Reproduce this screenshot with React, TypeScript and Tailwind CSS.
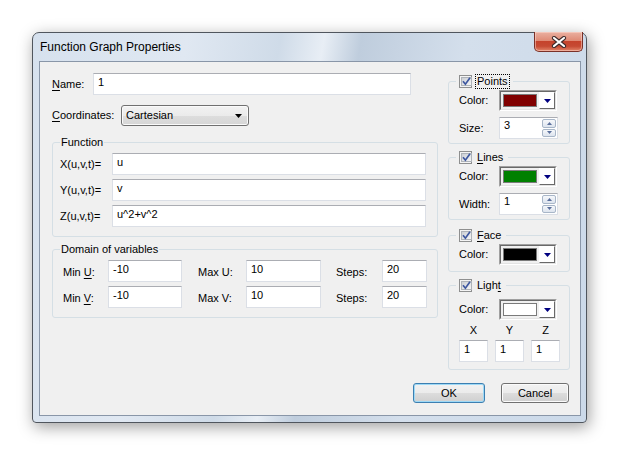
import React from 'react';

// Win7 "Function Graph Properties" dialog

function U({ children }: { children: React.ReactNode }) {
  return <span className="underline underline-offset-[2px] decoration-1">{children}</span>;
}

function TextBox({ value, className = '' }: { value: string; className?: string }) {
  return (
    <div className={`h-[22px] shrink-0 bg-white border border-[#dbdfe6] border-t-[#abadb3] pl-[4px] pt-[2px] leading-[13px] ${className}`}>
      {value}
    </div>
  );
}

function Check() {
  return (
    <span className="w-[13px] h-[13px] shrink-0 border border-[#8e8f8f] bg-[#f4f4f4] p-[1px] flex">
      <span className="flex-1 border border-[#aeb3b9] bg-gradient-to-br from-[#cbcfd5] to-[#f6f6f6] flex items-center justify-center">
        <svg width="9" height="9" viewBox="0 0 9 9">
          <path d="M1 4.2 L3.4 7.2 L8 0.8" stroke="#3d57a0" strokeWidth="1.7" fill="none" />
        </svg>
      </span>
    </span>
  );
}

function Group({ title, className = '', children }: { title: string; className?: string; children: React.ReactNode }) {
  return (
    <div className={`relative border border-[#d5dfe5] rounded-[3px] ${className}`}>
      <span className="absolute -top-[8px] left-[7px] px-[1px] bg-[#f0f0f0] leading-[14px]">{title}</span>
      {children}
    </div>
  );
}

function CheckGroup({ label, focus = false, className = '', children }: { label: React.ReactNode; focus?: boolean; className?: string; children: React.ReactNode }) {
  return (
    <div className={`relative border border-[#d5dfe5] rounded-[3px] pl-[10px] flex flex-col ${className}`}>
      <div className="absolute -top-[8px] left-[7px] px-[3px] bg-[#f0f0f0] flex items-center gap-[3px] h-[15px]">
        <Check />
        <span className={`leading-[13px] px-[1px] ${focus ? 'border border-dotted border-black' : 'border border-transparent'}`}>{label}</span>
      </div>
      {children}
    </div>
  );
}

function ColorCombo({ color }: { color: string }) {
  return (
    <div className="w-[58px] h-[21px] flex border border-[#a0a0a0] border-r-white border-b-white">
      <div className="flex-1 flex border border-[#696969] border-r-[#e3e3e3] border-b-[#e3e3e3] bg-[#f0f0f0]">
        <div className="flex-1 p-[2px] flex">
          <div className={`flex-1 border border-[#7a7a7a] ${color}`} />
        </div>
        <div className="w-[16px] flex items-center justify-center bg-white border border-white border-r-[#696969] border-b-[#696969]">
          <svg width="7" height="4" viewBox="0 0 7 4">
            <path d="M0 0h7L3.5 4z" fill="#000080" />
          </svg>
        </div>
      </div>
    </div>
  );
}

function Spin({ value }: { value: string }) {
  return (
    <div className="w-[59px] h-[22px] flex bg-white border border-[#dbdfe6] border-t-[#abadb3]">
      <span className="flex-1 pl-[4px] pt-[1px] leading-[13px]">{value}</span>
      <div className="w-[15px] flex flex-col gap-[1px] py-[1px] pr-[1px]">
        {[0, 1].map((i) => (
          <div key={i} className="flex-1 rounded-[2px] border border-[#a8b6c8] bg-gradient-to-b from-[#f6f8fb] to-[#dde4ee] flex items-center justify-center">
            <svg width="5" height="3" viewBox="0 0 5 3">
              <path d={i === 0 ? 'M0 3h5L2.5 0z' : 'M0 0h5L2.5 3z'} fill="#5a6f9c" />
            </svg>
          </div>
        ))}
      </div>
    </div>
  );
}

function Btn({ children, def = false, className = '' }: { children: React.ReactNode; def?: boolean; className?: string }) {
  return (
    <div
      className={`h-[20px] flex items-center justify-center rounded-[3px] border ${
        def ? 'border-[#3c7fb1] shadow-[inset_0_0_0_1px_#9ed9f6]' : 'border-[#707070] shadow-[inset_0_0_0_1px_#fbfbfb]'
      } bg-[linear-gradient(#f2f2f2_0%,#ebebeb_50%,#dddddd_50%,#cfcfcf_100%)] ${className}`}
    >
      {children}
    </div>
  );
}

export default function App() {
  return (
    <div className="min-h-[456px] w-[620px] bg-white pt-[32px] pl-[32px] text-[11px] text-black font-['Liberation_Sans',Arial,sans-serif]">
      <div className="w-[555px] h-[391px] flex flex-col rounded-t-[7px] rounded-b-[4px] border border-[#50565e] bg-[linear-gradient(100deg,#d6e1ee_0%,#e0e8f2_25%,#cfdbe8_40%,#e8eef5_47%,#bfcddd_53%,#d4dfec_70%,#cbd9e9_100%)] shadow-[2px_4px_16px_rgba(0,0,0,0.38)]">
        {/* Title bar */}
        <div className="h-[28px] flex justify-between pl-[7px] pr-[3px]">
          <span className="self-center text-[12px] leading-[14px]">Function Graph Properties</span>
          <div className="-mt-[1px] w-[49px] h-[20px] rounded-b-[5px] border border-[#7a3128] border-t-0 bg-[linear-gradient(#eab0a1_0%,#df8b76_45%,#c5432c_50%,#c64a33_75%,#e2866a_100%)] shadow-[inset_0_0_0_1px_rgba(255,220,210,0.5)] flex items-center justify-center">
            <svg width="16" height="12" viewBox="0 0 16 12">
              <path d="M3 2 L13 10 M13 2 L3 10" stroke="#3b2a2a" strokeWidth="4.2" strokeLinecap="round" />
              <path d="M3 2 L13 10 M13 2 L3 10" stroke="#ffffff" strokeWidth="2.2" strokeLinecap="round" />
            </svg>
          </div>
        </div>

        <div className="pl-[6px] pr-[5px]">
          {/* Client area */}
          <div className="h-[355px] w-[542px] border border-[#8996a8] bg-[#f0f0f0] flex flex-col pl-[12px] pr-[10px] pt-[11px] pb-[12px]">
            <div className="flex gap-[10px]">
              {/* Left column */}
              <div className="w-[386px] flex flex-col">
                <div className="flex items-center h-[22px]">
                  <span className="w-[41px]"><U>N</U>ame:</span>
                  <TextBox className="w-[318px]" value="1" />
                </div>
                <div className="flex items-center h-[21px] mt-[10px]">
                  <span className="w-[69px]"><U>C</U>oordinates:</span>
                  <div className="w-[128px] h-[21px] flex items-center justify-between rounded-[3px] border border-[#707070] bg-[linear-gradient(#f2f2f2_0%,#ebebeb_50%,#dddddd_50%,#d6d6d6_100%)] shadow-[inset_0_0_0_1px_#fafafa] pl-[4px] pr-[6px]">
                    <span>Cartesian</span>
                    <svg width="7" height="4" viewBox="0 0 7 4">
                      <path d="M0 0h7L3.5 4z" fill="#000" />
                    </svg>
                  </div>
                </div>

                <Group title="Function" className="mt-[16px] pt-[10px] pb-[9px] pl-[7px] flex flex-col gap-[4px]">
                  {[
                    ['X(u,v,t)=', 'u'],
                    ['Y(u,v,t)=', 'v'],
                    ['Z(u,v,t)=', 'u^2+v^2'],
                  ].map(([l, v]) => (
                    <div key={l} className="flex items-center">
                      <span className="w-[52px]">{l}</span>
                      <TextBox className="w-[314px]" value={v} />
                    </div>
                  ))}
                </Group>

                <Group title="Domain of variables" className="mt-[12px] pt-[10px] pb-[9px] pl-[10px] flex flex-col gap-[4px]">
                  {(['U', 'V'] as const).map((k) => (
                    <div key={k} className="flex items-center">
                      <span className="w-[45px] pt-[2px]">Min <U>{k}</U>:</span>
                      <TextBox className="w-[74px]" value="-10" />
                      <span className="w-[48px] ml-[16px] pt-[2px]">Max {k}:</span>
                      <TextBox className="w-[75px]" value="10" />
                      <span className="w-[46px] ml-[15px] pt-[2px]">Steps:</span>
                      <TextBox className="w-[45px]" value="20" />
                    </div>
                  ))}
                </Group>
              </div>

              {/* Right column */}
              <div className="w-[122px] flex flex-col">
                <CheckGroup label="Points" focus className="mt-[8px] pt-[8px] pb-[4px] gap-[6px]">
                  <div className="flex items-center">
                    <span className="w-[40px]">Color:</span>
                    <ColorCombo color="bg-[#800000]" />
                  </div>
                  <div className="flex items-center">
                    <span className="w-[40px]">Size:</span>
                    <Spin value="3" />
                  </div>
                </CheckGroup>

                <CheckGroup label={<><U>L</U>ines</>} className="mt-[13px] pt-[8px] pb-[4px] gap-[6px]">
                  <div className="flex items-center">
                    <span className="w-[40px]">Color:</span>
                    <ColorCombo color="bg-[#008000]" />
                  </div>
                  <div className="flex items-center">
                    <span className="w-[40px]">Width:</span>
                    <Spin value="1" />
                  </div>
                </CheckGroup>

                <CheckGroup label={<><U>F</U>ace</>} className="mt-[15px] pt-[8px] pb-[6px]">
                  <div className="flex items-center">
                    <span className="w-[40px]">Color:</span>
                    <ColorCombo color="bg-black" />
                  </div>
                </CheckGroup>

                <CheckGroup label={<>Ligh<U>t</U></>} className="mt-[13px] pt-[13px] pb-[7px]">
                  <div className="flex items-center">
                    <span className="w-[40px]">Color:</span>
                    <ColorCombo color="bg-white" />
                  </div>
                  <div className="flex gap-[7px] mt-[3px] h-[14px] leading-[14px]">
                    {['X', 'Y', 'Z'].map((a) => (
                      <span key={a} className="w-[29px] text-center">{a}</span>
                    ))}
                  </div>
                  <div className="flex gap-[7px] mt-[3px]">
                    {['1', '1', '1'].map((v, i) => (
                      <TextBox key={i} className="w-[29px]" value={v} />
                    ))}
                  </div>
                </CheckGroup>
              </div>
            </div>

            <div className="mt-auto flex justify-end gap-[16px] pr-[1px]">
              <Btn def className="w-[72px]">OK</Btn>
              <Btn className="w-[68px]">Cancel</Btn>
            </div>
          </div>
        </div>
      </div>
    </div>
  );
}
